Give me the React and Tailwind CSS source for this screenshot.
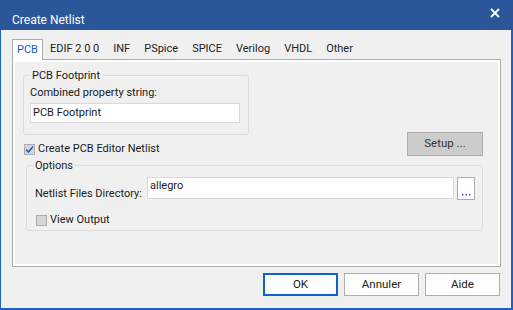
import React from 'react'

const tabs = ['PCB', 'EDIF 2 0 0', 'INF', 'PSpice', 'SPICE', 'Verilog', 'VHDL', 'Other']

function Check({ checked, label }) {
  return (
    <label className="flex items-center gap-[3px] text-[11px] text-[#1a1a1a] leading-[16px]">
      <span className="w-[11px] h-[11px] border border-[#adadad] bg-[#d6d6d6] flex items-center justify-center">
        {checked && (
          <svg width="9" height="9" viewBox="0 0 9 9">
            <path d="M1 4.5 L3.5 7 L8 1.5" fill="none" stroke="#1f5fb8" strokeWidth="1.6" />
          </svg>
        )}
      </span>
      {label}
    </label>
  )
}

function Button({ children, primary }) {
  return (
    <button
      className={
        'h-[23px] w-[75px] text-[11.5px] text-[#222] bg-[#fdfdfd] ' +
        (primary ? 'border-2 border-[#0a64d2]' : 'border border-[#adadad]')
      }
    >
      {children}
    </button>
  )
}

export default function App() {
  return (
    <div className="w-[513px] h-[310px] flex flex-col bg-[#f0f0f0] font-['Roboto',sans-serif]">
      {/* title bar */}
      <div className="h-[30px] shrink-0 bg-[#2b579a] flex items-center justify-between pl-[12px] pr-[13px] text-white">
        <span className="text-[12px] pt-[9px]">Create Netlist</span>
        <svg width="10" height="10" viewBox="0 0 10 10" className="-mt-[4px]">
          <path d="M1 1 L9 9 M9 1 L1 9" stroke="#fff" strokeWidth="1.8" />
        </svg>
      </div>

      <div className="flex-1 flex flex-col border-l border-r-2 border-b-2 border-[#1c62c6] pl-[11px] pr-[10px] pt-[9px]">
        {/* tabs */}
        <div className="flex items-end h-[20px] text-[11px]">
          {tabs.map((t, i) =>
            i === 0 ? (
              <div
                key={t}
                className="h-[21px] w-[31px] -mb-px z-10 bg-white border border-b-0 border-[#adadad] text-[#0a5fc4] flex items-center justify-center"
              >
                {t}
              </div>
            ) : (
              <div key={t} className="h-[19px] px-[7px] text-[#222] flex items-center">
                {t}
              </div>
            )
          )}
        </div>

        {/* panel */}
        <div className="h-[208px] border border-[#adadad] shadow-[inset_0_0_0_2px_#fff] pl-[10px] pr-[17px] pt-[8px] flex flex-col">
          <div className="flex">
            <div className="w-[226px] flex flex-col">
              <fieldset className="border border-[#dcdcdc] rounded-[3px] pl-[6px] pr-[8px] pb-[11px]">
                <legend className="px-[2px] text-[11px] leading-[15px] text-[#1a1a1a]">PCB Footprint</legend>
                <div className="text-[11px] leading-[16px] text-[#1a1a1a] mt-[2px]">Combined property string:</div>
                <div className="mt-[2px] h-[20px] bg-white border border-[#d9d9d9] pl-[2px] text-[11px] leading-[18px] text-[#1a1a1a]">
                  PCB Footprint
                </div>
              </fieldset>
              <div className="mt-[6px] pl-[1px]">
                <Check checked label="Create PCB Editor Netlist" />
              </div>
            </div>
            <button className="ml-auto mt-[64px] h-[24px] w-[76px] bg-[#cccccc] border border-[#adadad] text-[11.5px] text-[#333]">
              Setup ...
            </button>
          </div>

          <fieldset className="mt-px ml-[3px] border border-[#dcdcdc] rounded-[3px] pl-[6px] pr-[7px] pb-[2px]">
            <legend className="px-[2px] text-[11px] leading-[15px] text-[#1a1a1a]">Options</legend>
            <div className="flex items-start mt-[4px]">
              <span className="w-[114px] pl-[2px] mt-[9px] text-[11px] leading-[16px] text-[#1a1a1a] whitespace-nowrap">
                Netlist Files Directory:
              </span>
              <div className="flex-1 h-[22px] bg-white border border-[#d9d9d9] pl-[2px] text-[11px] leading-[16px] text-[#1a1a1a]">
                allegro
              </div>
              <div className="ml-[3px] w-[18px] h-[23px] bg-white border border-[#adadad] flex items-end justify-center pb-[3px]">
                <svg width="9" height="2" viewBox="0 0 9 2">
                  <rect x="0" y="0" width="1.5" height="1.5" fill="#7a3ac8" />
                  <rect x="3.5" y="0" width="1.5" height="1.5" fill="#3a5ad0" />
                  <rect x="7" y="0" width="1.5" height="1.5" fill="#c83a8a" />
                </svg>
              </div>
            </div>
            <div className="mt-[10px] pl-[3px]">
              <Check label="View Output" />
            </div>
          </fieldset>
        </div>

        {/* bottom buttons */}
        <div className="flex justify-end gap-[6px] mt-[6px] pr-px">
          <Button primary>OK</Button>
          <Button>Annuler</Button>
          <Button>Aide</Button>
        </div>
      </div>
    </div>
  )
}
